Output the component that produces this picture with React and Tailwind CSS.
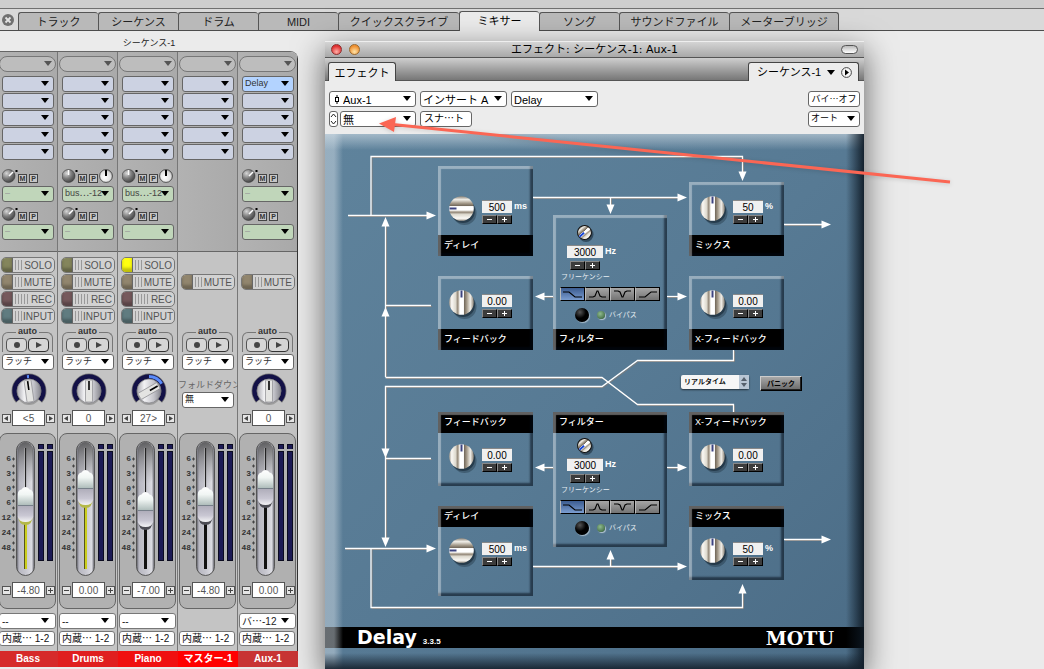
import { useState } from 'react';
import clsx from 'clsx';

const TABS = [
  { name: 'トラック', width: 'w-20' },
  { name: 'シーケンス', width: 'w-20' },
  { name: 'ドラム', width: 'w-20' },
  { name: 'MIDI', width: 'w-20' },
  { name: 'クイックスクライブ', width: 'w-[121px]' },
  { name: 'ミキサー', width: 'w-20' },
  { name: 'ソング', width: 'w-20' },
  { name: 'サウンドファイル', width: 'w-[110px]' },
  { name: 'メーターブリッジ', width: 'w-[110px]' },
];

const CHANNELS = [
  { name: 'Bass', sends: ['–', '–'], pan: -8, panText: '<5', fader: 46, level: '-4.80', lit: true, output: '--', color: 'bg-[#d62a2a]' },
  { name: 'Drums', sends: ['bus⋯-12', '–'], pan: 0, panText: '0', fader: 29, level: '0.00', lit: true, output: '--', color: 'bg-[#e01f1f]' },
  { name: 'Piano', sends: ['bus⋯-12', '–'], pan: 60, panText: '27>', fader: 51, level: '-7.00', solo: true, output: '--', color: 'bg-[#f01010]' },
  { name: 'マスター-1', master: true, fader: 46, level: '-4.80', color: 'bg-[#ff0000]' },
  { name: 'Aux-1', aux: true, insert: 'Delay', sends: ['–', '–'], pan: 0, panText: '0', fader: 29, level: '0.00', output: 'バ⋯-12', color: 'bg-[#c83434]' },
];

// shared gradients, referenced by id from the other drawings
function Defs() {
  return (
    <svg className="absolute size-0" aria-hidden="true">
      <defs>
        <linearGradient id="steel">
          <stop offset="0" stopColor="#a49c90" />
          <stop offset="0.1" stopColor="#faf8f4" />
          <stop offset="0.26" stopColor="#dedacf" />
          <stop offset="0.34" stopColor="#9a8f80" />
          <stop offset="0.4" stopColor="#c9c2b6" />
          <stop offset="0.43" stopColor="#ffffff" />
          <stop offset="0.58" stopColor="#ffffff" />
          <stop offset="0.61" stopColor="#72685a" />
          <stop offset="0.72" stopColor="#a89e8e" />
          <stop offset="0.86" stopColor="#f0eee8" />
          <stop offset="1" stopColor="#8a8276" />
        </linearGradient>
        <radialGradient id="dark-ball" cx="0.35" cy="0.3" r="0.8">
          <stop offset="0" stopColor="#d6d6d6" />
          <stop offset="0.5" stopColor="#7a7a7a" />
          <stop offset="1" stopColor="#383838" />
        </radialGradient>
        <radialGradient id="white-ball" cx="0.4" cy="0.6" r="0.7">
          <stop offset="0" stopColor="#ffffff" />
          <stop offset="0.7" stopColor="#dcdcdc" />
          <stop offset="1" stopColor="#8a8a8a" />
        </radialGradient>
        <linearGradient id="pan-cap">
          <stop offset="0" stopColor="#a9a9b0" />
          <stop offset="0.3" stopColor="#f2f2f4" />
          <stop offset="0.7" stopColor="#c4c4ca" />
          <stop offset="1" stopColor="#85858d" />
        </linearGradient>
        <linearGradient id="slot">
          <stop offset="0" stopColor="#55565e" />
          <stop offset="0.14" stopColor="#b8b8c2" />
          <stop offset="0.5" stopColor="#c6c6ce" />
          <stop offset="0.85" stopColor="#dcdce2" />
          <stop offset="1" stopColor="#50515a" />
        </linearGradient>
        <linearGradient id="slot-top" x2="0" y2="1">
          <stop offset="0" stopColor="#444" stopOpacity="0.8" />
          <stop offset="1" stopColor="#888" stopOpacity="0" />
        </linearGradient>
        <linearGradient id="cap-top" x2="0" y2="1">
          <stop offset="0" stopColor="#ffffff" />
          <stop offset="0.4" stopColor="#f0f5f3" />
          <stop offset="1" stopColor="#a9b8b6" />
        </linearGradient>
        <linearGradient id="cap-bottom" x2="0" y2="1">
          <stop offset="0" stopColor="#b0aebb" />
          <stop offset="0.6" stopColor="#c9c7d3" />
          <stop offset="1" stopColor="#f4f4f6" />
        </linearGradient>
      </defs>
    </svg>
  );
}

function Caret({ className = 'text-black' }) {
  return (
    <svg viewBox="0 0 8 5" className={clsx('block h-[5px] w-2 fill-current', className)} aria-hidden="true">
      <path d="M0 0h8L4 5z" />
    </svg>
  );
}

function Select({ label, value, className, selectClass = 'bg-white', caretClass, arrow = 'right-[7px]' }) {
  return (
    <div className={clsx('relative h-4', className)}>
      <select
        aria-label={label}
        defaultValue={value}
        className={clsx('block h-4 w-full appearance-none rounded-[3px] border border-[#666] py-0 pl-0.5', selectClass)}
      >
        <option value={value}>{value}</option>
      </select>
      <span className={clsx('pointer-events-none absolute top-[5px]', arrow)}>
        <Caret className={caretClass} />
      </span>
    </div>
  );
}

function SendRow({ channel, index, wet }) {
  return (
    <div className="flex h-[17px] pl-1">
      <div className="relative h-4 w-4">
        <svg viewBox="0 0 16 16" className="size-4" aria-hidden="true">
          <circle cx="6.5" cy="7" r="6.5" fill="url(#dark-ball)" stroke="#3b3b3b" strokeWidth="0.6" />
          <path d={wet ? 'M6.5 6V1' : 'M7 7l4-4'} stroke="#fff" strokeWidth="1.6" />
          <path d="M13.5 1h2v2h-2z" fill="#000" />
        </svg>
        <input type="range" aria-label={`${channel} send ${index}`} className="absolute inset-0 w-full opacity-0" />
      </div>
      {['M', 'P'].map((t) => (
        <button key={t} className="mt-[5px] mr-0.5 size-[9px] border border-[#444] bg-[#c6c6c6] text-center text-[7px] leading-[7px] font-bold text-[#333]">
          {t}
        </button>
      ))}
      {wet && (
        <svg viewBox="0 0 14 14" className="-ml-px size-3.5" aria-hidden="true">
          <circle cx="7" cy="7" r="6.4" fill="url(#white-ball)" stroke="#333" strokeWidth="0.8" />
          <path d="M7 7V1" stroke="#000" strokeWidth="2" />
        </svg>
      )}
    </div>
  );
}

function TallyButton({ label, led, ribs = 3 }) {
  return (
    <button className="flex h-4 w-[54px] items-center overflow-hidden rounded-[5px] border border-[#777] bg-[#d2d2d2] text-[10px] text-[#555]">
      <span className={clsx('h-full w-[11px] shrink-0 border-r border-[#666] shadow-[inset_0_-4px_3px_rgba(0,0,0,0.25)]', led)} />
      <svg viewBox="0 0 14 10" className="-mr-1.5 ml-0.5 h-2.5 w-3.5 shrink-0" aria-hidden="true">
        {Array.from({ length: ribs }, (_, i) => (
          <path key={i} d={`M${i * 3 + 0.5} 0v10`} stroke="#999" />
        ))}
      </svg>
      <span className="flex flex-1 justify-end pr-0.5">{label}</span>
    </button>
  );
}

// point on the pan ring, angle in degrees clockwise from the top
const ringPoint = (deg) => {
  const a = (deg * Math.PI) / 180;
  return `${18 + 14.5 * Math.sin(a)} ${18 - 14.5 * Math.cos(a)}`;
};

function PanKnob({ channel, value }) {
  return (
    <div className="relative ml-[13px] h-9 w-9">
      <svg viewBox="0 0 36 36" className="size-9" aria-hidden="true">
        <path d={`M${ringPoint(-132)}A14.5 14.5 0 1 1 ${ringPoint(132)}`} fill="none" stroke="#777" strokeWidth="6" />
        <path d={`M${ringPoint(-130)}A14.5 14.5 0 1 1 ${ringPoint(130)}`} fill="none" stroke="#131147" strokeWidth="4.4" />
        {value !== 0 && (
          <path
            d={value > 0 ? `M${ringPoint(0)}A14.5 14.5 0 0 1 ${ringPoint(value)}` : `M${ringPoint(value)}A14.5 14.5 0 0 1 ${ringPoint(0)}`}
            fill="none"
            stroke="#5a8bfa"
            strokeWidth="3"
          />
        )}
        <circle cx="18" cy="20" r="12" fill="#000" opacity="0.2" />
        <circle cx="18" cy="18" r="12" fill="url(#pan-cap)" stroke="#77777c" strokeWidth="0.6" />
        <g transform={`rotate(${value} 18 18)`}>
          <rect x="14.5" y="7" width="7" height="22" rx="1" fill="#e4e4e2" stroke="#8c8c90" strokeWidth="0.7" />
          <path d="M18 8v9" stroke="#000" strokeWidth="1.6" />
        </g>
      </svg>
      <input type="range" min="-64" max="64" defaultValue={value} aria-label={`${channel} pan`} className="absolute inset-0 w-full opacity-0" />
    </div>
  );
}

function ValueRow({ label, value, kind }) {
  const icons = kind === 'pan' ? ['M6 2v5L2 4.5z', 'M3 2v5l4-2.5z'] : ['M2 4h5v1H2z', 'M2 4h2V2h1v2h2v1H5v2H4V5H2z'];
  const names = kind === 'pan' ? ['left', 'right'] : ['down', 'up'];
  const step = (i) => (
    <button aria-label={`${label} ${names[i]}`} className="size-[9px] shrink-0 bg-[#e6e6e6] text-[#444] outline -outline-offset-1 outline-[#555]">
      <svg viewBox="0 0 9 9" className="block size-[9px] fill-current" aria-hidden="true"><path d={icons[i]} /></svg>
    </button>
  );
  return (
    <div className="flex h-4 items-center gap-px">
      {step(0)}
      <input
        aria-label={label}
        defaultValue={value}
        className="h-4 w-[33px] border border-[#555] bg-white text-center text-[10px] text-[#555]"
      />
      {step(1)}
    </div>
  );
}

function Fader({ channel }) {
  const y = channel.fader;
  return (
    <div className="mx-px mt-[7px] h-44 rounded-lg border border-[#666] bg-[#b1b1b1] pt-[7px]">
      <div className="flex h-[135px]">
        <div className="flex h-[113px] w-[11px] flex-col justify-between pt-3 text-right font-['Liberation_Mono',monospace] text-[8px] leading-[12px] font-bold text-[#333]">
          {[6, 3, 0, 6, 12, 24, 48].map((n, i) => <span key={i}>{n}</span>)}
        </div>
        <svg viewBox="0 0 5 135" className="h-[135px] w-[5px]" aria-hidden="true">
          {Array.from({ length: 15 }, (_, i) => (
            <path key={i} d={`M1 ${18 + i * 7}h3M2.5 ${16.5 + i * 7}v3`} stroke="#444" />
          ))}
        </svg>
        <div className="relative w-[19px]">
          <svg viewBox="0 0 19 135" className="h-[135px] w-[19px]" aria-hidden="true">
            <rect x="0.5" y="0.5" width="18" height="134" rx="9" fill="url(#slot)" stroke="#555" />
            <rect x="2" y="1" width="15" height="42" rx="7.5" fill="url(#slot-top)" />
            <path d="M9.5 7v121" stroke="#222" strokeWidth="1.2" />
            <path d="M8.5 7v121" stroke="#fff" strokeWidth="0.6" opacity="0.5" />
            <path d={`M9.5 ${y + 34}V128`} stroke={channel.lit ? '#55551c' : '#111'} strokeWidth="3" />
            {channel.lit && <path d={`M10 ${y + 34}V128`} stroke="#d8dc1e" strokeWidth="1.8" />}
            <path
              d={`M2 ${y + 28}Q2.5 ${y + 38} 9.5 ${y + 38}Q16.5 ${y + 38} 17 ${y + 28}z`}
              fill={channel.lit ? '#b4b84a' : '#4c4c54'}
            />
            <path
              d={`M1.8 ${y + 19}V${y + 7}Q2 ${y + 3} 5.5 ${y + 2.5}Q6.5 ${y} 9.5 ${y}Q12.5 ${y} 13.5 ${y + 2.5}Q17 ${y + 3} 17.2 ${y + 7}V${y + 19}z`}
              fill="url(#cap-top)"
            />
            <path d={`M1.8 ${y + 19}V${y + 30}Q3 ${y + 35} 9.5 ${y + 35}Q16 ${y + 35} 17.2 ${y + 30}V${y + 19}z`} fill="url(#cap-bottom)" />
            <path d={`M1.8 ${y + 18.5}h15.4`} stroke="#77808a" />
          </svg>
          <input
            type="range"
            aria-label={`${channel.name} fader`}
            className="absolute inset-0 h-full w-full opacity-0 [direction:rtl] [writing-mode:vertical-lr]"
          />
        </div>
        <div className="ml-[3px] flex gap-[3px] pt-[3px]">
          {[0, 1].map((i) => (
            <div key={i} className="flex w-1.5 flex-col gap-0.5">
              <span className="h-[5px] border-x border-t border-[#0b0b20] bg-[#1c1a55]" />
              <span className="h-[110px] border border-[#0b0b20] bg-[#1c1a55]" />
            </div>
          ))}
        </div>
      </div>
      <div className="mt-[6px] pl-0.5">
        <ValueRow label={`${channel.name} level`} value={channel.level} kind="level" />
      </div>
    </div>
  );
}

function Strip({ channel }) {
  const { name, master, aux } = channel;
  const track = !master && !aux;
  return (
    <section aria-label={name} className="w-[60px] border-r border-[#777] bg-[#c4c4c4] last:border-[#333]">
      <div className="h-[200px] border-b border-[#666] bg-linear-to-r from-[#b2b2b2] to-[#aaaaaa] pt-1">
        <Select
          label={`${name} view`}
          value=""
          className="mx-px"
          selectClass="rounded-full! border-[#777] bg-[#bdbdbd]"
          caretClass="text-[#555]"
          arrow="right-1"
        />
        <div className="mt-1 ml-1 grid w-[52px] gap-px">
          {[0, 1, 2, 3, 4].map((i) => {
            const used = i === 0 && channel.insert;
            return (
              <Select
                key={i}
                label={`${name} insert ${i + 1}`}
                value={used || ''}
                arrow="right-[5px]"
                selectClass={used ? 'bg-[#b3d3ff] text-[9px] text-[#333]' : 'bg-[#ccd2e2] text-[9px]'}
              />
            );
          })}
        </div>
        {channel.sends && (
          <div className="mt-[9px]">
            {channel.sends.map((send, i) => (
              <div key={i} className="mb-[5px]">
                <SendRow channel={name} index={i + 1} wet={send !== '–'} />
                <Select
                  label={`${name} bus ${i + 1}`}
                  value={send}
                  className="ml-1 w-[52px]"
                  arrow="right-[5px]"
                  selectClass={clsx('bg-[#c0d6ba] text-[9px]', send === '–' ? 'text-[#999]' : 'text-[#444]')}
                />
              </div>
            ))}
          </div>
        )}
      </div>

      <div className="grid h-[72px] grid-rows-[16px_16px_16px_16px] gap-px pt-[5px] pl-[3px]">
        {track ? <TallyButton label="SOLO" led={channel.solo ? 'bg-[#ffff10]' : 'bg-[#84855c]'} /> : <span />}
        <TallyButton label="MUTE" led="bg-[#92866e]" />
        {track && <TallyButton label="REC" led="bg-[#76595c]" ribs={5} />}
        {track && <TallyButton label="INPUT" led="bg-[#607c80]" />}
      </div>

      <div className="flex h-7 flex-col px-1">
        <div className="z-10 mx-auto h-2 px-1 text-[9px] leading-[15px] font-bold text-[#333]">
          <span className="bg-[#c4c4c4] px-0.5">auto</span>
        </div>
        <div className="flex flex-1 justify-center gap-px rounded-t-md border border-b-0 border-[#777] pt-[5px]">
          <button aria-label="record automation" className="flex h-[14px] w-[21px] items-center justify-center rounded-[4px] border border-[#555] bg-[#d6d6d6]">
            <span className="size-1.5 rounded-full bg-[#444]" />
          </button>
          <button aria-label="play automation" className="flex h-[14px] w-[21px] items-center justify-center rounded-[4px] border border-[#333] bg-[#d6d6d6]">
            <svg viewBox="0 0 6 6" className="size-1.5 fill-[#444]" aria-hidden="true"><path d="M0 0l6 3-6 3z" /></svg>
          </button>
        </div>
      </div>
      <Select label={`${name} automation mode`} value="ラッチ" className="mt-0.5 ml-1 w-[52px]" arrow="right-[5px]" selectClass="bg-white text-[9px] text-[#333]" />

      {master ? (
        <div className="h-14 pt-[9px]">
          <div className="h-[13px] text-[9px] leading-[13px] whitespace-nowrap text-[#666]">フォルドダウン</div>
          <Select label="フォルドダウン" value="無" className="ml-1 w-[52px]" arrow="right-[5px]" selectClass="bg-white text-[9px] text-[#222]" />
        </div>
      ) : (
        <div className="h-14 pt-[3px]">
          <PanKnob channel={name} value={channel.pan} />
          <div className="mt-px pl-1">
            <ValueRow label={`${name} pan value`} value={channel.panText} kind="pan" />
          </div>
        </div>
      )}

      <Fader channel={channel} />

      <div className="mx-px mt-1 h-4">
        {channel.output && <Select label={`${name} output`} value={channel.output} selectClass="bg-white text-[10px] text-[#222] border-[#777]" />}
      </div>
      <button className="mx-px mt-0.5 block h-[15px] w-14 rounded-[3px] border border-[#777] bg-white pl-0.5 text-left text-[10px] leading-[13px] whitespace-nowrap text-[#111]">
        内蔵⋯ 1-2
      </button>
      <div className={clsx('mt-[5px] -mr-px h-4 text-center text-[10px] leading-4 font-bold text-white', channel.color)}>{name}</div>
    </section>
  );
}

function BigKnob({ label, turn = 0 }) {
  return (
    <div className="relative h-[25px] w-[25px]">
      <svg viewBox="0 0 25 25" className="size-[25px] overflow-visible" aria-hidden="true">
        <circle cx="15.5" cy="17" r="12" fill="#0c1a26" opacity="0.3" />
        <circle cx="14" cy="15" r="12" fill="#0c1a26" opacity="0.5" />
        <g transform={`rotate(${turn} 12.5 12.5)`}>
          <circle cx="12.5" cy="12.5" r="12.3" fill="url(#steel)" />
          <path d="M12.5 0.5v7" stroke="#3d4480" strokeWidth="2" />
        </g>
      </svg>
      <input type="range" aria-label={label} className="absolute inset-0 w-full opacity-0" />
    </div>
  );
}

function Stepper({ label }) {
  return (
    <div className="flex h-[9px]">
      {['M4 3h5v1H4z', 'M4 3h2V1h1v2h2v1H7v2H6V4H4z'].map((d, i) => (
        <button key={d} aria-label={`${label} ${i ? '+' : '−'}`} className="h-[9px] w-[15px] border border-t-[#888] border-r-black border-b-black border-l-[#888] bg-[#3c3c3c]">
          <svg viewBox="0 0 13 7" className="block h-[7px] w-[13px] fill-white" aria-hidden="true"><path d={d} /></svg>
        </button>
      ))}
    </div>
  );
}

function Field({ label, value, className = 'w-[30px]' }) {
  return (
    <input
      aria-label={label}
      defaultValue={value}
      className={clsx('block h-[13px] border-t border-[#888] bg-[#f0f0f0] text-center text-[10px] text-black', className)}
    />
  );
}

function Node({ title, flip, className, children }) {
  return (
    <section aria-label={title} className={clsx('absolute flex', flip ? 'flex-col-reverse' : 'flex-col', className)}>
      <div className="flex-1">{children}</div>
      <h3 className="h-[21px] bg-black pl-1.5 text-[9px] leading-[21px] font-medium text-white">{title}</h3>
      <div className="pointer-events-none absolute inset-0 shadow-[inset_4px_4px_1px_-1px_rgba(255,255,255,0.38),inset_-4px_-4px_2px_-1px_rgba(0,10,20,0.55)]" />
    </section>
  );
}

function KnobNode({ title, value, unit, turn, flip, tall, className }) {
  return (
    <Node title={title} flip={flip} className={clsx('w-[95px]', className)}>
      <div className={clsx('flex gap-2 pl-[11px]', tall && !flip ? 'pt-[30px]' : flip ? 'pt-[11px]' : 'pt-[14px]')}>
        <BigKnob label={title} turn={turn} />
        <div className="grid gap-0.5 pt-1">
          <Field label={`${title} ${unit || ''}`} value={value} />
          <Stepper label={title} />
        </div>
        {unit && <span className="-ml-1.5 pt-1 text-[9px] leading-[13px] font-bold text-white">{unit}</span>}
      </div>
    </Node>
  );
}

const SHAPES = [
  { name: 'low pass', d: 'M3 5h6l6 5h7' },
  { name: 'peak', d: 'M4 10h4l2-1 2-5h1l2 5 2 1h4' },
  { name: 'notch', d: 'M4 4h4l2 1 2 5h1l2-5 2-1h4' },
  { name: 'high pass', d: 'M4 10h6l6-5h6' },
];

function FilterNode({ flip, className }) {
  const [shape, setShape] = useState('low pass');
  return (
    <Node title="フィルター" flip={flip} className={clsx('h-[135px] w-[114px]', className)}>
      <div className={clsx('pl-[7px]', flip ? 'pt-[5px]' : 'pt-[10px]')}>
        <div className="relative ml-[17px] size-4">
          <svg viewBox="0 0 16 16" className="size-4 overflow-visible" aria-hidden="true">
            <circle cx="9" cy="9.5" r="7.5" fill="#0c1a26" opacity="0.5" />
            <g transform="rotate(-130 7.5 7.5)">
              <circle cx="7.5" cy="7.5" r="7" fill="url(#steel)" stroke="#111" />
              <path d="M7.5 1v6" stroke="#1746d8" strokeWidth="2" />
            </g>
          </svg>
          <input type="range" aria-label="フリーケンシー" className="absolute inset-0 w-full opacity-0" />
        </div>
        <div className="mt-1 flex gap-0.5 pl-[7px]">
          <Field label="フリーケンシー Hz" value="3000" className="w-9" />
          <span className="text-[9px] leading-[13px] font-bold text-white">Hz</span>
        </div>
        <div className="mt-[3px] pl-[10px]"><Stepper label="フリーケンシー" /></div>
        <div className="mt-0.5 h-[10px] pl-px text-[7px] leading-[10px] text-[#e6edf2]">フリーケンシー</div>
        <div className="mt-[5px] flex h-[14px] w-[100px]">
          {SHAPES.map((s) => (
            <button
              key={s.name}
              aria-label={s.name}
              onClick={() => setShape(s.name)}
              className={clsx(
                'h-[14px] w-[25px] border border-t-black border-r-black border-b-black border-l-[#bbb]',
                shape === s.name ? 'bg-linear-to-b from-[#3c5c90] to-[#7b9dd0]' : 'bg-linear-to-b from-[#a6a6a6] to-[#747474]',
              )}
            >
              <svg viewBox="1 1 23 12" className="block h-3 w-[23px]" fill="none" stroke="#000" strokeWidth="1.1" aria-hidden="true"><path d={s.d} /></svg>
            </button>
          ))}
        </div>
        <div className="mt-[6px] flex h-4 items-center pl-[15px]">
          <button aria-label="バイパス" className="size-[14px] rounded-full bg-[radial-gradient(circle_at_35%_30%,#555,#000_45%)] shadow-[1px_1px_1px_#a8bccb]" />
          <span className="ml-2 size-2 rounded-full bg-[radial-gradient(circle_at_40%_35%,#8fbb8f,#2c5530)] shadow-[1px_1px_1px_#b7c8d4]" />
          <span className="ml-1 text-[7px] leading-[10px] text-[#e6edf2]">バイパス</span>
        </div>
      </div>
    </Node>
  );
}

const WIRES = [
  'M348 215.5H430',
  'M371 215V156.5H742.5V174',
  'M533 197.5H680',
  'M610.5 197.5V207',
  'M385.5 377V224',
  'M385.5 305.5H431',
  'M784 224.5H824',
  'M553 296.5H541',
  'M667 296.5H680',
  'M733.5 350V360.5H637.5L602 386.5H385.5V542',
  'M733.5 412V404.5H637.5L602 377.5H385.5',
  'M385.5 458.5H431',
  'M345 548.5H430',
  'M371 548V607.5H742.5V592',
  'M533 566.5H680',
  'M610.5 566.5V557',
  'M553 467.5H541',
  'M667 467.5H680',
  'M784 539.5H824',
];

// arrow heads: tip position and direction
const HEADS = [
  [436, 215.5, 0], [742.5, 181, 90], [687, 197.5, 0], [610.5, 214, 90], [385.5, 217, -90], [385.5, 307, -90],
  [831, 224.5, 0], [535, 296.5, 180], [687, 296.5, 0], [385.5, 458, 90], [385.5, 547, 90], [436, 548.5, 0],
  [742.5, 584, -90], [687, 566.5, 0], [610.5, 550, -90], [535, 467.5, 180], [687, 467.5, 0], [831, 539.5, 0],
];

function Wires() {
  return (
    <svg viewBox="325 134 539 493" className="absolute top-0 left-0 h-[493px] w-[539px]" aria-hidden="true">
      <g transform="translate(1 1)" stroke="#7f7d7a" fill="none">
        {WIRES.map((d) => <path key={d} d={d} />)}
      </g>
      <g stroke="#fff" strokeWidth="1.3" fill="none">
        {WIRES.map((d) => <path key={d} d={d} />)}
      </g>
      {HEADS.map(([x, y, turn]) => (
        <path key={`${x}-${y}`} d="M0 0L-9.5-4V4z" fill="#fff" transform={`translate(${x} ${y}) rotate(${turn})`} />
      ))}
    </svg>
  );
}

function DelayPlugin() {
  return (
    <div className="relative flex-1 overflow-hidden bg-linear-to-br from-[#5f839c] via-[#577a94] to-[#4b6c86]">
      <div className="relative h-[493px]">
        <Wires />
        <KnobNode title="ディレイ" value="500" unit="ms" turn={-90} tall className="top-8 left-[113px] h-[90px]" />
        <KnobNode title="フィードバック" value="0.00" className="top-[142px] left-[113px] h-[74px]" />
        <FilterNode className="top-[81px] left-[228px]" />
        <KnobNode title="ミックス" value="50" unit="%" className="top-12 left-[364px] h-[74px]" />
        <KnobNode title="X-フィードバック" value="0.00" className="top-[142px] left-[364px] h-[74px]" />

        <div className="absolute top-[241px] left-[356px] h-[14px] w-[68px]">
          <select
            aria-label="処理モード"
            defaultValue="リアルタイム"
            className="block h-[14px] w-full appearance-none rounded-[2px] bg-[#f6f6f6] py-0 pl-[3px] text-[7px] font-bold text-[#111] shadow-[0_1px_2px_rgba(0,0,0,0.6)]"
          >
            <option>リアルタイム</option>
          </select>
          <svg viewBox="0 0 10 14" className="pointer-events-none absolute top-0 right-0 h-[14px] w-2.5" aria-hidden="true">
            <path d="M0 0h10v14H0z" fill="#b9c6d4" />
            <path d="M5 2l3 4H2zM5 12l3-4H2z" fill="#56606c" />
          </svg>
        </div>
        <button className="absolute top-[242px] left-[435px] h-[15px] w-[42px] border border-t-[#ccc] border-r-black border-b-black border-l-[#ccc] bg-linear-to-b from-[#a8a8a8] to-[#6a6a6a] text-[7px] leading-[12px] font-bold text-black shadow-[inset_-1px_-1px_0_#222]">
          パニック
        </button>

        <KnobNode title="フィードバック" value="0.00" flip className="top-[278px] left-[113px] h-[74px]" />
        <KnobNode title="ディレイ" value="500" unit="ms" turn={-90} flip tall className="top-[372px] left-[113px] h-[90px]" />
        <FilterNode flip className="top-[278px] left-[228px]" />
        <KnobNode title="X-フィードバック" value="0.00" flip className="top-[278px] left-[364px] h-[74px]" />
        <KnobNode title="ミックス" value="50" unit="%" flip className="top-[372px] left-[364px] h-[74px]" />
      </div>
      <div className="flex h-[21px] items-center justify-between bg-black pr-[30px] pl-8 text-white">
        <div className="flex items-baseline gap-1.5">
          <span className="font-['DejaVu_Sans',sans-serif] text-[19px] leading-[20px] font-bold">Delay</span>
          <span className="text-[8px] font-bold">3.3.5</span>
        </div>
        <span className="font-['DejaVu_Serif',serif] text-[19px] leading-[20px] font-bold">MOTU</span>
      </div>
      <div className="h-[21px]" />
      <div className="pointer-events-none absolute inset-y-0 left-0 w-[18px] bg-linear-to-r from-[#cfdae3]/50 from-50% to-transparent" />
      <div className="pointer-events-none absolute inset-x-0 top-0 h-4 bg-linear-to-b from-[#dbe5ec]/55 to-transparent" />
      <div className="pointer-events-none absolute inset-y-0 right-0 w-[18px] bg-linear-to-l from-[#0c1722]/90 to-transparent" />
      <div className="pointer-events-none absolute inset-x-0 bottom-0 h-4 bg-linear-to-t from-[#14202c]/90 to-transparent" />
    </div>
  );
}

function EffectWindow() {
  return (
    <section aria-label="エフェクト" className="mt-[10px] ml-[27px] flex max-w-[539px] min-w-0 flex-1 flex-col bg-[#ececec] shadow-[0_10px_30px_rgba(0,0,0,0.6)]">
      <header className="flex h-[17px] items-center border-t border-b border-t-[#eee] border-b-[#555] bg-linear-to-b from-[#d4d4d4] to-[#a9a9a9] px-1.5">
        <div className="flex w-9 gap-[7px]">
          <button aria-label="close" className="size-[11px] rounded-full border border-[#8c3030] bg-[radial-gradient(circle_at_50%_75%,#ffb0a8,#e03030_70%)]" />
          <button aria-label="minimize" className="size-[11px] rounded-full border border-[#9a6a30] bg-[radial-gradient(circle_at_50%_75%,#ffe4a8,#ef9030_70%)]" />
        </div>
        <h1 className="flex-1 text-center font-['DejaVu_Sans','Noto_Sans_CJK_JP',sans-serif] text-[11px] leading-[15px] text-black">
          エフェクト: シーケンス-1: Aux-1
        </h1>
        <div className="flex w-9 justify-end">
          <button aria-label="toolbar" className="h-[9px] w-[17px] rounded-full border border-[#555] bg-linear-to-b from-[#bbb] to-white" />
        </div>
      </header>
      <div className="flex h-[23px] items-end justify-between border-b border-[#555] bg-linear-to-b from-[#cfcfcf] to-[#777] pr-[5px] pl-[3px]">
        <button className="-mb-px h-[19px] w-[68px] rounded-t-[3px] border border-b-0 border-[#444] bg-[#ececec] text-[11px] leading-[20px] text-black">エフェクト</button>
        <button className="-mb-px flex h-[19px] w-[111px] items-center gap-1.5 rounded-t-[3px] border border-b-0 border-[#444] bg-[#ececec] pl-2 text-[11px] text-black">
          シーケンス-1
          <Caret />
          <svg viewBox="0 0 11 11" className="size-[11px]" aria-hidden="true">
            <circle cx="5.5" cy="5.5" r="4.9" fill="#f6f6f6" stroke="#444" />
            <path d="M4 2.5v6l4-3z" />
          </svg>
        </button>
      </div>
      <div className="flex h-[53px] justify-between px-1 pt-[10px] text-[11px] text-black">
        <div className="grid content-start gap-1">
          <div className="flex gap-1">
            <div className="relative h-4 w-[87px]">
              <select aria-label="トラック" defaultValue="Aux-1" className="block h-4 w-full appearance-none rounded-[3px] border border-[#666] bg-white py-0 pl-[13px] text-[11px]">
                <option>Aux-1</option>
              </select>
              <svg viewBox="0 0 4 9" className="pointer-events-none absolute top-[4px] left-[6px] h-[9px] w-1" aria-hidden="true">
                <path d="M2 0v9" stroke="#000" />
                <rect x="0.5" y="2.5" width="3" height="4" fill="#fff" stroke="#000" />
              </svg>
              <span className="pointer-events-none absolute top-[5px] right-[5px]"><Caret /></span>
            </div>
            <Select label="インサート" value="インサート A" className="w-[87px]" arrow="right-[5px]" selectClass="bg-white text-[11px]" />
            <Select label="プラグイン" value="Delay" className="w-[87px]" arrow="right-[5px]" selectClass="bg-white text-[11px]" />
          </div>
          <div className="flex">
            <button aria-label="プリセット切替" className="mr-0.5 h-4 w-[9px] rounded-[3px] border border-[#666] bg-white">
              <svg viewBox="0 0 7 14" className="block h-[14px] w-[7px]" fill="none" stroke="#222" aria-hidden="true">
                <path d="M1 5l2.5-3L6 5M1 9l2.5 3L6 9" />
              </svg>
            </button>
            <Select label="プリセット" value="無" className="mr-1 w-[76px]" arrow="right-[5px]" selectClass="bg-white text-[11px]" />
            <button className="h-4 w-[52px] rounded-[3px] border border-[#666] bg-white pl-[3px] text-left text-[10px] leading-[14px]">スナ⋯ト</button>
          </div>
        </div>
        <div className="grid w-[52px] content-start gap-1">
          <button className="h-4 rounded-[3px] border border-[#666] bg-white text-[9px] leading-[14px] whitespace-nowrap">バイ⋯オフ</button>
          <Select label="オートメーション" value="オート" arrow="right-[5px]" selectClass="bg-white text-[9px]" />
        </div>
      </div>
      <DelayPlugin />
    </section>
  );
}

export default function App() {
  const [tab, setTab] = useState('ミキサー');
  return (
    <div className="relative flex h-screen flex-col overflow-hidden bg-[#ebebeb] font-['Liberation_Sans','Noto_Sans_CJK_JP',sans-serif]">
      <Defs />
      <div className="h-[9px] shrink-0 border-b border-[#707070] bg-[#cecece]" />
      <nav className="flex h-[22px] shrink-0 items-end border-b border-[#4c4c4c] bg-[#d9d9d9]">
        <button aria-label="閉じる" className="mr-1 mb-[4px] ml-0.5 size-3">
          <svg viewBox="0 0 12 12" className="size-3" aria-hidden="true">
            <circle cx="6" cy="6" r="6" fill="#707070" />
            <path d="M3.5 3.5l5 5M8.5 3.5l-5 5" stroke="#e4e4e4" strokeWidth="1.8" />
          </svg>
        </button>
        {TABS.map((t) => (
          <button
            key={t.name}
            onClick={() => setTab(t.name)}
            className={clsx(
              'rounded-t-[3px] border-t border-l border-[#555] text-[11px] leading-[19px] last:border-r',
              t.width,
              tab === t.name ? '-mb-px h-[20px] bg-[#ebebeb] text-black' : 'h-[18px] bg-[#b9b9b9] text-[#222]',
            )}
          >
            {t.name}
          </button>
        ))}
      </nav>
      <main className="flex min-h-0 flex-1">
        <div className="shrink-0">
          <h2 className="h-5 text-center text-[9px] leading-[24px] text-[#222]">シーケンス-1</h2>
          <div className="-ml-0.5 flex overflow-hidden rounded-tr-lg border-t border-[#666]">
            {CHANNELS.map((c) => <Strip key={c.name} channel={c} />)}
          </div>
        </div>
        <EffectWindow />
      </main>
      <svg viewBox="0 0 580 80" className="pointer-events-none absolute top-[110px] left-[375px] h-20 w-[580px] drop-shadow-sm" aria-hidden="true">
        <path d="M18 14.5L575 72" stroke="#fb6654" strokeWidth="3" />
        <path d="M4 13.5L21 7l-2 15z" fill="#fb6654" />
      </svg>
    </div>
  );
}
